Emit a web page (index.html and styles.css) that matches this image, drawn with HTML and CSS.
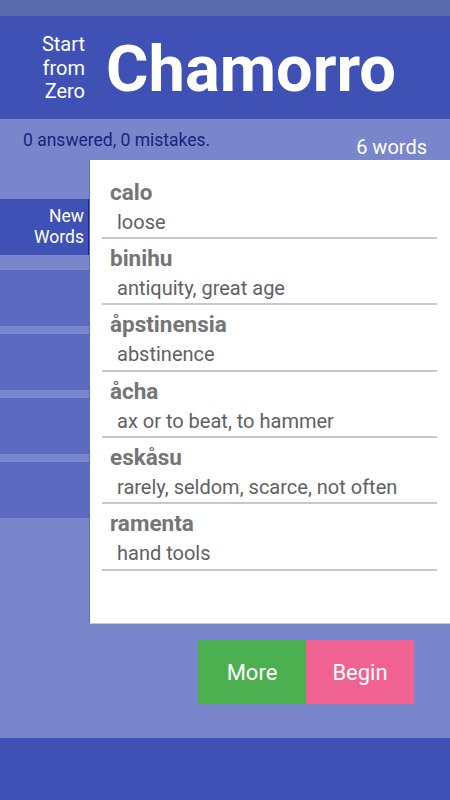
FILE: index.html
```html
<!DOCTYPE html>
<html>
<head>
<meta charset="utf-8">
<link rel="stylesheet" href="styles.css">
</head>
<body>
<div class="app">
  <div class="status"></div>
  <header class="header">
    <div class="subtitle">Start<br>from<br>Zero</div>
    <h1 class="title">Chamorro</h1>
  </header>
  <main class="main">
    <div class="stats">
      <div class="progress">0 answered, 0 mistakes.</div>
      <div class="count">6 words</div>
    </div>
    <div class="content">
      <nav class="sidebar">
        <div class="tab tab-active">New<br>Words</div>
        <div class="tab tab-first"></div>
        <div class="tab"></div>
        <div class="tab"></div>
        <div class="tab"></div>
      </nav>
      <section class="card">
        <ul class="words">
          <li class="item"><div class="word">calo</div><div class="def">loose</div></li>
          <li class="item"><div class="word">binihu</div><div class="def">antiquity, great age</div></li>
          <li class="item"><div class="word">åpstinensia</div><div class="def">abstinence</div></li>
          <li class="item"><div class="word">åcha</div><div class="def">ax or to beat, to hammer</div></li>
          <li class="item"><div class="word">eskåsu</div><div class="def">rarely, seldom, scarce, not often</div></li>
          <li class="item"><div class="word">ramenta</div><div class="def">hand tools</div></li>
        </ul>
      </section>
    </div>
    <div class="actions">
      <button class="btn btn-more">More</button>
      <button class="btn btn-begin">Begin</button>
    </div>
  </main>
  <footer class="footer"></footer>
</div>
</body>
</html>
```

FILE: styles.css
```css
* { box-sizing: border-box; }
html, body { margin: 0; padding: 0; }
body {
  font-family: Roboto, "Noto Sans", sans-serif;
  width: 450px;
  height: 800px;
  overflow: hidden;
}
.app {
  display: flex;
  flex-direction: column;
  height: 800px;
  background: #7986cb;
}
.status {
  height: 16px;
  background: #5c6bae;
}
.header {
  height: 103px;
  background: #3f51b5;
  display: flex;
  align-items: center;
  color: #fff;
}
.subtitle {
  width: 85px;
  text-align: right;
  font-size: 20px;
  line-height: 23.5px;
  padding-top: 2px;
}
.title {
  margin: 0 0 0 21px;
  font-size: 65px;
  font-weight: 700;
  line-height: 1;
  padding-top: 4px;
}
.main {
  flex: 1;
  display: flex;
  flex-direction: column;
}
.stats {
  height: 41px;
  display: flex;
  justify-content: space-between;
  padding: 0 23px;
}
.progress {
  align-self: flex-start;
  padding-top: 11px;
  font-size: 17.5px;
  line-height: 20px;
  color: #1a237e;
}
.count {
  align-self: flex-end;
  padding-bottom: 1px;
  font-size: 20px;
  line-height: 24px;
  color: #fff;
}
.content {
  display: flex;
  height: 464px;
}
.sidebar {
  width: 89px;
  padding-top: 39px;
  display: flex;
  flex-direction: column;
}
.tab {
  height: 56px;
  margin-top: 8px;
  background: #5c6bc0;
}
.tab-first { margin-top: 15px; }
.tab-active {
  margin-top: 0;
  background: #3f51b5;
  border-right: 1px solid #1a237e;
  color: #fff;
  text-align: right;
  font-size: 17.5px;
  line-height: 21px;
  padding: 7px 4px 0 0;
}
.card {
  flex: 1;
  background: #fff;
  border-left: 1px solid #5c6bc0;
  border-bottom: 1px solid #c5cae9;
}
.words {
  list-style: none;
  margin: 0;
  padding: 12.5px 13px 0 12px;
}
.item {
  padding-top: 5px;
  border-bottom: 2px solid #c8c8c8;
  height: 66.4px;
}
.word {
  padding-left: 8px;
  font-size: 22.5px;
  font-weight: 700;
  line-height: 29px;
  color: #757575;
}
.def {
  padding-left: 15px;
  font-size: 20px;
  line-height: 30px;
  color: #616161;
}
.actions {
  display: flex;
  justify-content: flex-end;
  padding: 16px 36px 0 0;
}
.btn {
  width: 108px;
  height: 64px;
  border: 0;
  margin: 0;
  padding: 0;
  color: #fff;
  font-family: Roboto, sans-serif;
  font-size: 22px;
}
.btn-more { background: #4caf50; }
.btn-begin { background: #f06292; }
.footer {
  height: 62px;
  background: #3f51b5;
}
```
